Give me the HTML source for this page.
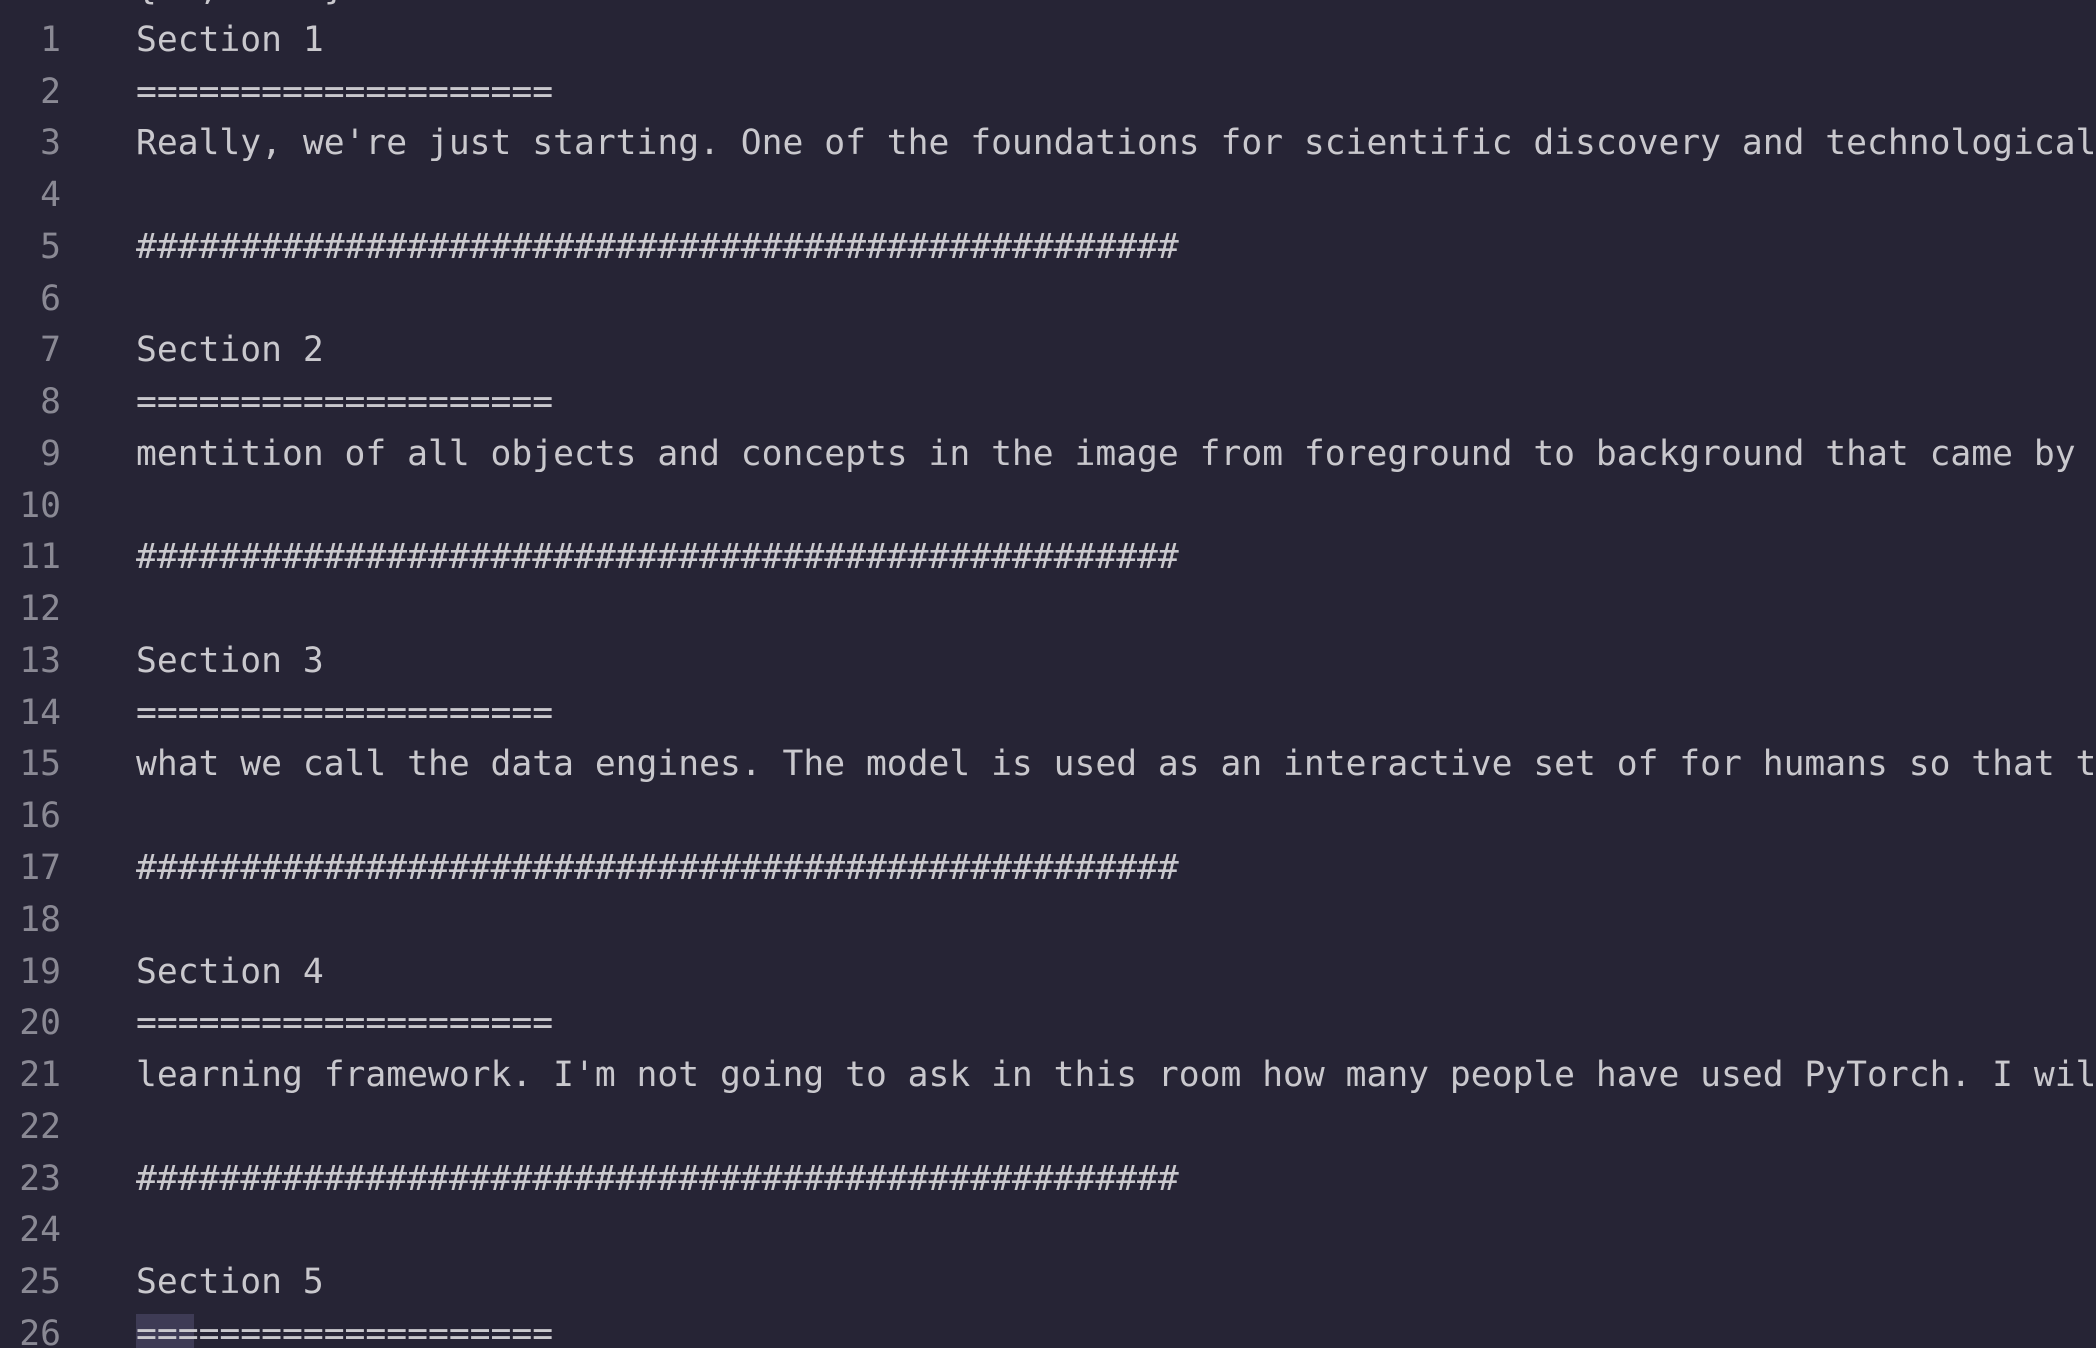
<!DOCTYPE html>
<html><head><meta charset="utf-8"><style>
html,body{margin:0;padding:0;background:#262435;width:2096px;height:1348px;overflow:hidden}
.ed{position:absolute;left:0;top:-37px;width:2096px;height:1385px;overflow:hidden;font-family:"DejaVu Sans Mono","Liberation Mono",monospace;font-size:34.65px;}
.l{height:51.77px;line-height:51.77px;white-space:pre;position:relative;overflow:hidden;width:2096px}
.n{position:absolute;left:0;width:61px;text-align:right;color:#8a8994}
.t{position:absolute;left:136px;color:#c9c8cd}
.hl{position:absolute;left:136px;top:5px;width:58px;height:52px;background:#3e3b55}
</style></head><body><div class="ed">
<div class="l"><span class="n"></span><span class="t">{  ,     }</span></div>
<div class="l"><span class="n">1</span><span class="t">Section 1</span></div>
<div class="l"><span class="n">2</span><span class="t">====================</span></div>
<div class="l"><span class="n">3</span><span class="t">Really, we're just starting. One of the foundations for scientific discovery and technological</span></div>
<div class="l"><span class="n">4</span></div>
<div class="l"><span class="n">5</span><span class="t">##################################################</span></div>
<div class="l"><span class="n">6</span></div>
<div class="l"><span class="n">7</span><span class="t">Section 2</span></div>
<div class="l"><span class="n">8</span><span class="t">====================</span></div>
<div class="l"><span class="n">9</span><span class="t">mentition of all objects and concepts in the image from foreground to background that came by</span></div>
<div class="l"><span class="n">10</span></div>
<div class="l"><span class="n">11</span><span class="t">##################################################</span></div>
<div class="l"><span class="n">12</span></div>
<div class="l"><span class="n">13</span><span class="t">Section 3</span></div>
<div class="l"><span class="n">14</span><span class="t">====================</span></div>
<div class="l"><span class="n">15</span><span class="t">what we call the data engines. The model is used as an interactive set of for humans so that t</span></div>
<div class="l"><span class="n">16</span></div>
<div class="l"><span class="n">17</span><span class="t">##################################################</span></div>
<div class="l"><span class="n">18</span></div>
<div class="l"><span class="n">19</span><span class="t">Section 4</span></div>
<div class="l"><span class="n">20</span><span class="t">====================</span></div>
<div class="l"><span class="n">21</span><span class="t">learning framework. I'm not going to ask in this room how many people have used PyTorch. I wil</span></div>
<div class="l"><span class="n">22</span></div>
<div class="l"><span class="n">23</span><span class="t">##################################################</span></div>
<div class="l"><span class="n">24</span></div>
<div class="l"><span class="n">25</span><span class="t">Section 5</span></div>
<div class="l"><span class="hl"></span><span class="n">26</span><span class="t">====================</span></div>
</div></body></html>
